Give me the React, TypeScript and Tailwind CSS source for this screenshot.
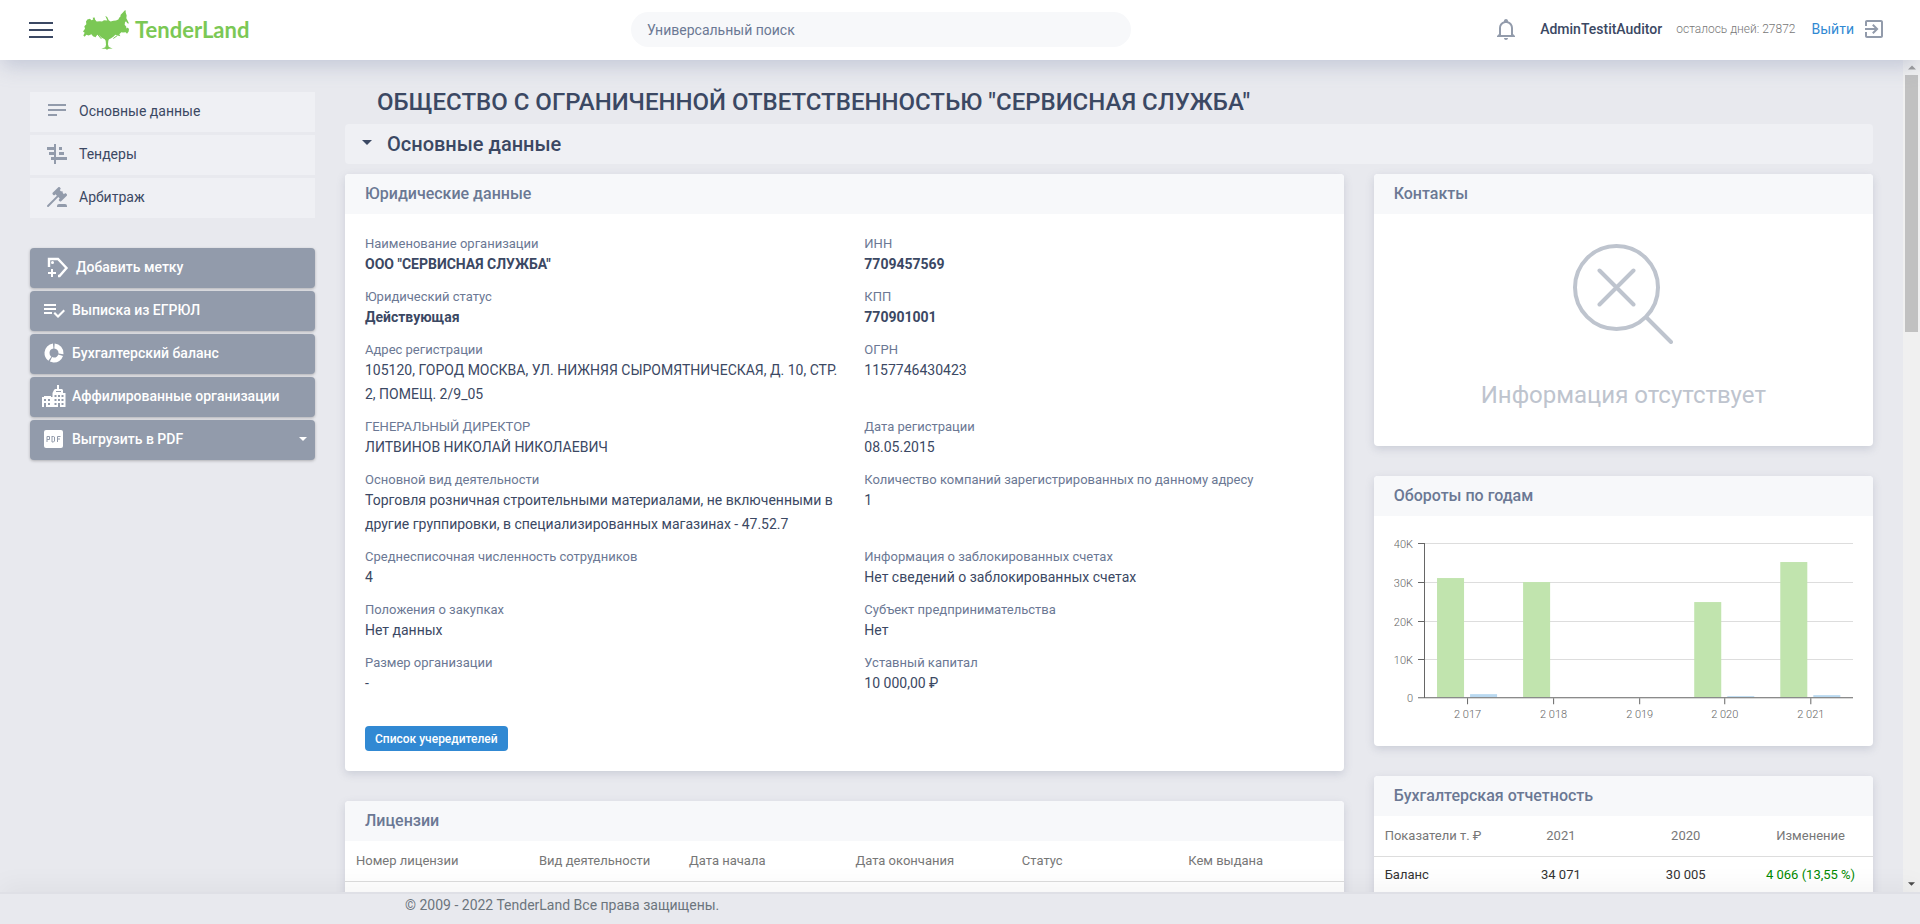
import type { ReactNode } from "react";

type Field = { label: string; value: string; strong?: boolean };

const fields: Field[] = [
  { label: "Наименование организации", value: 'ООО "СЕРВИСНАЯ СЛУЖБА"', strong: true },
  { label: "ИНН", value: "7709457569", strong: true },
  { label: "Юридический статус", value: "Действующая", strong: true },
  { label: "КПП", value: "770901001", strong: true },
  { label: "Адрес регистрации", value: "105120, ГОРОД МОСКВА, УЛ. НИЖНЯЯ СЫРОМЯТНИЧЕСКАЯ, Д. 10, СТР. 2, ПОМЕЩ. 2/9_05" },
  { label: "ОГРН", value: "1157746430423" },
  { label: "ГЕНЕРАЛЬНЫЙ ДИРЕКТОР", value: "ЛИТВИНОВ НИКОЛАЙ НИКОЛАЕВИЧ" },
  { label: "Дата регистрации", value: "08.05.2015" },
  {
    label: "Основной вид деятельности",
    value: "Торговля розничная строительными материалами, не включенными в другие группировки, в специализированных магазинах - 47.52.7",
  },
  { label: "Количество компаний зарегистрированных по данному адресу", value: "1" },
  { label: "Среднесписочная численность сотрудников", value: "4" },
  { label: "Информация о заблокированных счетах", value: "Нет сведений о заблокированных счетах" },
  { label: "Положения о закупках", value: "Нет данных" },
  { label: "Субъект предпринимательства", value: "Нет" },
  { label: "Размер организации", value: "-" },
  { label: "Уставный капитал", value: "10 000,00 ₽" },
];

function Icon({ children }: { children: ReactNode }) {
  return (
    <svg viewBox="0 0 24 24" className="size-6 shrink-0" fill="currentColor" aria-hidden="true">
      {children}
    </svg>
  );
}

const navItems = [
  {
    text: "Основные данные",
    icon: <path d="M3 5h18v2H3zM3 10h18v2H3zM3 15h9v2H3z" />,
  },
  {
    text: "Тендеры",
    icon: (
      <path d="M9 2h2v20H9zM2 5h7v3H2zM4 10h5v3H4zM6 15h3v3H6zM14 5h3v3h-3zM14 10h5v3h-5zM11 15h11v3H11z" />
    ),
  },
  {
    text: "Арбитраж",
    icon: (
      <path d="M2.3 20.28L11.9 10.68L10.5 9.26L9.78 9.97C9.39 10.36 8.76 10.36 8.37 9.97L7.66 9.26C7.27 8.87 7.27 8.24 7.66 7.85L13.32 2.19C13.71 1.8 14.34 1.8 14.73 2.19L15.44 2.9C15.83 3.29 15.83 3.92 15.44 4.31L14.73 5L16.15 6.43C16.54 6.04 17.17 6.04 17.56 6.43C17.95 6.82 17.95 7.46 17.56 7.85L18.97 9.26L19.68 8.55C20.07 8.16 20.71 8.16 21.1 8.55L21.8 9.26C22.19 9.65 22.19 10.29 21.8 10.68L16.15 16.33C15.76 16.72 15.12 16.72 14.73 16.33L14.03 15.63C13.63 15.24 13.63 14.6 14.03 14.21L14.73 13.5L13.32 12.09L3.71 21.7C3.32 22.09 2.69 22.09 2.3 21.7C1.91 21.31 1.91 20.67 2.3 20.28M20 19A2 2 0 0 1 22 21V22H12V21A2 2 0 0 1 14 19H20Z" />
    ),
  },
];

const actionButton =
  "flex h-10 w-full items-center rounded-sm bg-[#929bab] pr-2 pb-0.5 text-left text-sm font-medium text-white shadow-[0_1px_3px_rgba(0,0,0,0.25)]";

function Caret({ className }: { className: string }) {
  return (
    <svg viewBox="0 0 10 5" className={className} fill="currentColor" aria-hidden="true">
      <path d="M0 0h10L5 5z" />
    </svg>
  );
}

function Logo() {
  return (
    <a href="#" className="flex items-center gap-1.5 text-[#7bc855]">
      <svg viewBox="21 16 138 119" className="h-10 w-[46px]" fill="currentColor" aria-hidden="true">
        <path d="M21 80L27 72L25 64L31 58L30 50L34 44L42 42L46 46L52 44L50 39L56 38L57 44L62 50L72 49L78 50L84 46L94 47L90 38L88 33L94 37L98 46L104 50L112 48L120 47L127 44L130 38L133 36L134 30L140 24L146 17L149 16L149 23L152 32L151 40L155 48L159 56L154 55L150 49L147 52L146 60L151 66L150 72L153 68L159 72L158 80L153 87L149 82L141 83L136 82L130 88L133 94L125 92L118 90L113 95L104 101L99 103L97 108L96 118L98 126L104 129L110 131L98 132L93 135L88 132L76 132L88 127L90 120L89 108L86 103L76 98L70 92L64 90L60 95L52 94L46 88L38 92L31 90L26 96L22 92L26 84z" />
        <path d="M66 90l10 12M124 92l-12 9M50 92l10 4" stroke="currentColor" strokeWidth="3" />
      </svg>
      <span className="font-['Lato',sans-serif] text-[22px] leading-8 font-bold">TenderLand</span>
    </a>
  );
}

function TopBar() {
  return (
    <header className="relative z-10 flex h-[60px] shrink-0 items-center bg-white pr-[34px] pl-[29px] shadow-[0_8px_20px_-2px_rgba(140,150,180,0.4)]">
      <div className="flex w-[602px] items-center gap-[30px]">
        <button type="button" aria-label="Меню" className="text-[#3b4863]">
          <svg viewBox="0 0 24 16" className="h-4 w-6" fill="currentColor">
            <path d="M0 0h24v2H0zM0 7h24v2H0zM0 14h24v2H0z" />
          </svg>
        </button>
        <Logo />
      </div>
      <input
        type="search"
        aria-label="Универсальный поиск"
        placeholder="Универсальный поиск"
        className="mb-px h-[35px] w-[500px] rounded-full bg-[#f7f8fa] px-4 text-sm text-[#3b4863] outline-none placeholder:text-[#6b7894]"
      />
      <div className="ml-auto flex items-center pb-0.5 text-[#929bab]">
        <button type="button" aria-label="Уведомления" className="mr-[22px]">
          <Icon>
            <path d="M10 21H14C14 22.1 13.1 23 12 23S10 22.1 10 21M21 19V20H3V19L5 17V11C5 7.9 7.03 5.17 10 4.29C10 4.19 10 4.1 10 4C10 2.9 10.9 2 12 2S14 2.9 14 4C14 4.1 14 4.19 14 4.29C16.97 5.17 19 7.9 19 11V17L21 19M17 11C17 8.24 14.76 6 12 6S7 8.24 7 11V18H17V11Z" />
          </Icon>
        </button>
        <span className="text-sm font-medium text-[#3b4863]">AdminTestitAuditor</span>
        <span className="ml-3.5 text-xs font-light text-[#777777]">осталось дней: 27872</span>
        <a href="#" className="ml-4 flex items-center gap-2 text-sm text-[#3189d3]">
          Выйти
          <span className="text-[#929bab]">
            <Icon>
              <path d="M10.09 15.59L11.5 17l5-5-5-5-1.41 1.41L12.67 11H3v2h9.67l-2.58 2.59zM19 3H5c-1.11 0-2 .9-2 2v4h2V5h14v14H5v-4H3v4c0 1.1.89 2 2 2h14c1.1 0 2-.9 2-2V5c0-1.1-.9-2-2-2z" />
            </Icon>
          </span>
        </a>
      </div>
    </header>
  );
}

function Sidebar() {
  return (
    <aside className="w-[285px] shrink-0 pt-8">
      <nav className="flex flex-col gap-[3px]">
        {navItems.map((item) => (
          <a key={item.text} href="#" className="flex h-10 items-center gap-2.5 bg-[#eff0f4] pb-0.5 pl-[15px] text-sm text-[#3b4863]">
            <span className="text-[#929bab]">
              <Icon>{item.icon}</Icon>
            </span>
            {item.text}
          </a>
        ))}
      </nav>
      <div className="mt-[30px] flex flex-col gap-[3px]">
        <button type="button" className={`${actionButton} gap-[7px] pl-[15px]`}>
          <Icon>
            <path d="M4 12V4h9l8.5 9-7 8H13" fill="none" stroke="currentColor" strokeWidth="2.4" />
            <path d="M6 14h2v3h3v2H8v3H6v-3H3v-2h3z" />
            <circle cx="7.5" cy="7.5" r="1.5" />
          </Icon>
          Добавить метку
        </button>
        <button type="button" className={`${actionButton} gap-1.5 pl-3`}>
          <Icon>
            <path d="M14 10H2V12H14V10M14 6H2V8H14V6M2 16H10V14H2V16M21.5 11.5L23 13L16 20L11.5 15.5L13 14L16 17L21.5 11.5Z" />
          </Icon>
          Выписка из ЕГРЮЛ
        </button>
        <button type="button" className={`${actionButton} gap-1.5 pl-3`}>
          <Icon>
            <circle
              cx="12"
              cy="12"
              r="7"
              fill="none"
              stroke="currentColor"
              strokeWidth="5"
              pathLength="100"
              strokeDasharray="26 3 27 3 38 3"
              transform="rotate(-86 12 12)"
            />
          </Icon>
          Бухгалтерский баланс
        </button>
        <button type="button" className={`${actionButton} gap-1.5 pl-3`}>
          <Icon>
            <path
              fillRule="evenodd"
              d="M15 1h2v4h3l1 1v3h2.500v14H0V13h2v-1h7v1h1.500V9L12 6l1-1h2zM2 15v2h2v-2zM6 15v2h2v-2zM2 19v4h2v-4zM6 19v2h2v-2zM12.500 11v2h2v-2zM16 11v2h2v-2zM19.500 11v2h2v-2zM12.500 15v2h2v-2zM16 15v2h2v-2zM19.500 15v2h2v-2zM12.500 19v2h2v-2zM16 19v4h2v-4zM19.500 19v2h2v-2zM14 7h5v1h-5z"
            />
          </Icon>
          Аффилированные организации
        </button>
        <button type="button" className={`${actionButton} gap-1.5 pl-3`}>
          <Icon>
            <rect x="2" y="3" width="19" height="18" rx="2" />
            <path d="M5 15V9.500h2.500v3H5M10 9v6h1.500l1-1v-4l-1-.500H10M15.500 15V9.500h3M15.500 12h2.500" fill="none" stroke="#929bab" />
          </Icon>
          Выгрузить в PDF
          <Caret className="ml-auto h-1 w-2" />
        </button>
      </div>
    </aside>
  );
}

function Card({ title, children }: { title: string; children: ReactNode }) {
  return (
    <section className="overflow-hidden rounded-sm bg-white shadow-[0_3px_8px_rgba(100,110,135,0.22)]">
      <h3 className="flex h-10 items-center bg-[#f7f8fa] px-5 text-base font-medium text-[#6b7894]">{title}</h3>
      {children}
    </section>
  );
}

const gridLines = [
  { y: 27.5, label: "40K" },
  { y: 66.5, label: "30K" },
  { y: 105.5, label: "20K" },
  { y: 143.5, label: "10K" },
  { y: 181.5, label: "0" },
];

const years = [
  { x: 73.5, label: "2 017", green: 119, blue: 3 },
  { x: 159.5, label: "2 018", green: 115, blue: 0 },
  { x: 245.5, label: "2 019", green: 0, blue: 0 },
  { x: 330.5, label: "2 020", green: 95, blue: 1 },
  { x: 416.5, label: "2 021", green: 135, blue: 2 },
];

function TurnoverChart() {
  return (
    <svg viewBox="0 0 459 230" className="block h-auto w-full font-light" role="img" aria-label="Обороты по годам">
      {gridLines.slice(0, 4).map((g) => (
        <path key={g.label} d={`M31 ${g.y}H459`} stroke="#dddddd" />
      ))}
      {years.map((yr) => (
        <g key={yr.label}>
          <rect x={yr.x - 30.5} y={181 - yr.green} width="27" height={yr.green} fill="#c1e4ae" />
          <rect x={yr.x + 2.5} y={181 - yr.blue} width="27" height={yr.blue} fill="#b9d9f1" />
          <path d={`M${yr.x} 182v6`} stroke="#666666" />
          <text x={yr.x} y="202" textAnchor="middle" fontSize="11" fill="#666666">
            {yr.label}
          </text>
        </g>
      ))}
      {gridLines.map((g) => (
        <g key={g.label}>
          <path d={`M24 ${g.y}h6`} stroke="#666666" />
          <text x="19" y={g.y + 4} textAnchor="end" fontSize="11" fill="#666666">
            {g.label}
          </text>
        </g>
      ))}
      <path d="M30.500 27V182M30 181.500H459" stroke="#666666" fill="none" />
    </svg>
  );
}

function Scrollbar() {
  return (
    <div className="flex w-[17px] shrink-0 flex-col items-center bg-[#f0f0f0]" aria-hidden="true">
      <Caret className="my-[5px] h-[5px] w-2 shrink-0 rotate-180 text-[#999999]" />
      <div className="h-[257px] w-[13px] bg-[#c1c1c1]" />
      <Caret className="mt-auto mb-1.5 h-1 w-[7px] text-[#4a4a4a]" />
    </div>
  );
}

export default function App() {
  return (
    <div className="flex h-screen flex-col overflow-hidden bg-[#e8e9ee] font-['Roboto',sans-serif] text-[#3b4863]">
      <TopBar />
      <div className="flex min-h-0 flex-1">
        <div className="flex min-w-0 flex-1 gap-[30px] overflow-hidden px-[30px]">
          <Sidebar />
          <main className="min-w-0 flex-1 pt-[26px]">
            <h1 className="pl-8 text-2xl font-medium">ОБЩЕСТВО С ОГРАНИЧЕННОЙ ОТВЕТСТВЕННОСТЬЮ "СЕРВИСНАЯ СЛУЖБА"</h1>
            <h2 className="mt-1.5">
              <button type="button" className="flex h-10 w-full items-center gap-[15px] rounded-sm bg-[#eff0f4] px-[17px] text-xl font-medium">
                <Caret className="mb-1 h-[5px] w-2.5" />
                Основные данные
              </button>
            </h2>
            <div className="mt-2.5 grid grid-cols-[2fr_1fr] items-start gap-[30px]">
              <div className="flex flex-col gap-[30px]">
                <Card title="Юридические данные">
                  <div className="pt-[21px] pb-5">
                    <dl className="grid grid-cols-2 gap-y-3">
                      {fields.map((f) => (
                        <div key={f.label} className="pl-5">
                          <dt className="text-[13px] leading-[17px] text-[#6b7894]">{f.label}</dt>
                          <dd className={f.strong ? "text-sm leading-6 font-bold" : "text-sm leading-6"}>{f.value}</dd>
                        </div>
                      ))}
                    </dl>
                    <button type="button" className="mt-[31px] ml-5 h-[25px] rounded-sm bg-[#3189d3] px-2.5 text-xs font-medium text-white">
                      Список учередителей
                    </button>
                  </div>
                </Card>
                <Card title="Лицензии">
                  <table className="w-full table-fixed text-left text-[13px] text-[#777777]">
                    <thead>
                      <tr className="h-10 border-b border-[#dddddd]">
                        <th className="w-[183px] pl-[11px] font-normal">Номер лицензии</th>
                        <th className="w-[150px] pl-[11px] font-normal">Вид деятельности</th>
                        <th className="pl-[11px] font-normal">Дата начала</th>
                        <th className="pl-[11px] font-normal">Дата окончания</th>
                        <th className="pl-[11px] font-normal">Статус</th>
                        <th className="pl-[11px] font-normal">Кем выдана</th>
                      </tr>
                    </thead>
                    <tbody>
                      <tr className="h-10">
                        <td colSpan={6} />
                      </tr>
                    </tbody>
                  </table>
                </Card>
              </div>
              <div className="flex flex-col gap-[30px]">
                <Card title="Контакты">
                  <div className="flex flex-col items-center pt-[30px] pb-[33px] text-[#bec4ce]">
                    <svg viewBox="0 0 100 100" className="size-[100px]" fill="none" stroke="currentColor" strokeWidth="4" strokeLinecap="round" aria-hidden="true">
                      <circle cx="43.500" cy="43.500" r="41.500" />
                      <path d="M26.500 26.500l34 34M60.500 26.500l-34 34M73.500 73.500L98 98" />
                    </svg>
                    <p className="mt-[33px] text-2xl leading-9">Информация отсутствует</p>
                  </div>
                </Card>
                <Card title="Обороты по годам">
                  <div className="px-5">
                    <TurnoverChart />
                  </div>
                </Card>
                <Card title="Бухгалтерская отчетность">
                  <table className="mb-5 w-full table-fixed text-center text-[13px]">
                    <thead>
                      <tr className="h-10 border-b border-[#dddddd] text-[#777777]">
                        <th className="pl-[11px] text-left font-normal">Показатели т. ₽</th>
                        <th className="font-normal">2021</th>
                        <th className="font-normal">2020</th>
                        <th className="font-normal">Изменение</th>
                      </tr>
                    </thead>
                    <tbody>
                      <tr className="h-9 text-[#333333]">
                        <td className="pl-[11px] text-left">Баланс</td>
                        <td>34 071</td>
                        <td>30 005</td>
                        <td className="text-[#008a00]">4 066 (13,55 %)</td>
                      </tr>
                    </tbody>
                  </table>
                </Card>
              </div>
            </div>
          </main>
        </div>
        <Scrollbar />
      </div>
      <footer className="relative z-10 flex h-8 shrink-0 items-start border-t-2 border-[#dfe0e6] bg-[#e8e9ee] pl-[405px] text-sm leading-[22px] text-[#6c757d] shadow-[0_-8px_24px_rgba(0,0,0,0.04)]">
        © 2009 - 2022 TenderLand Все права защищены.
      </footer>
    </div>
  );
}
